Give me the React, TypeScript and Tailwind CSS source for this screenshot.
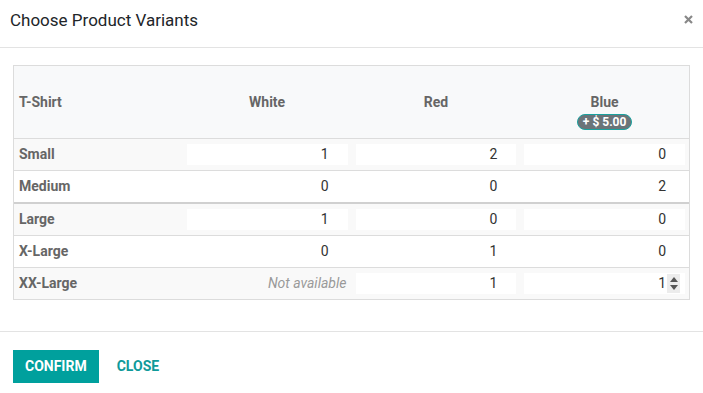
const colors = ['White', 'Red', 'Blue'];

type Cell = number | null;

const rows: { label: string; values: Cell[]; thick?: boolean }[] = [
  { label: 'Small', values: [1, 2, 0] },
  { label: 'Medium', values: [0, 0, 2] },
  { label: 'Large', values: [1, 0, 0], thick: true },
  { label: 'X-Large', values: [0, 1, 0] },
  { label: 'XX-Large', values: [null, 1, 1] },
];

function Spinner() {
  return (
    <div className="absolute right-[5px] top-[1px] bottom-[1px] w-[13px] bg-[#ececec] flex flex-col items-center justify-center gap-[3px]">
      <div className="w-0 h-0 border-l-[4px] border-r-[4px] border-b-[5px] border-l-transparent border-r-transparent border-b-[#555]" />
      <div className="w-0 h-0 border-l-[4px] border-r-[4px] border-t-[5px] border-l-transparent border-r-transparent border-t-[#555]" />
    </div>
  );
}

export default function App() {
  return (
    <div
      className="w-[703px] h-[393px] bg-white text-[#212529] overflow-hidden"
      style={{ fontFamily: 'Roboto, "Liberation Sans", sans-serif' }}
    >
      <div className="h-[48px] border-b border-[#e3e3e3] flex items-start justify-between pl-[10px] pr-[10px] pt-[9px]">
        <div className="text-[17px] leading-[22px] text-[#212529]">Choose Product Variants</div>
        <svg width="9" height="9" viewBox="0 0 9 9" className="mt-[6px]">
          <path d="M1 1 L8 8 M8 1 L1 8" stroke="#888" strokeWidth="2.2" strokeLinecap="butt" />
        </svg>
      </div>

      <div className="px-[13px] pt-[17px] h-[283px]">
        <div className="border border-[#dcdcdc] text-[14px] text-[#666]">
          <div className="grid grid-cols-4 h-[72px] bg-[#f8f9fa] font-bold">
            <div className="pl-[5px] pt-[27px] leading-[18px]">T-Shirt</div>
            {colors.map((c) => (
              <div key={c} className="flex flex-col items-center pt-[27px]">
                <div className="leading-[18px]">{c}</div>
                {c === 'Blue' && (
                  <div className="mt-[3px] h-[16px] px-[5px] rounded-full bg-[#6b7479] border-[1.5px] border-[#1aa29f] text-white text-[12px] leading-[13px] font-bold flex items-center">
                    + $ 5.00
                  </div>
                )}
              </div>
            ))}
          </div>
          {rows.map((r, i) => (
            <div
              key={r.label}
              className={`grid grid-cols-4 ${r.thick ? 'h-[33px] border-t-2 border-[#d0d0d0]' : 'h-[32px] border-t border-[#dcdcdc]'} ${i % 2 === 0 ? 'bg-[#f9f9f9]' : 'bg-white'}`}
            >
              <div className="pl-[5px] flex items-center font-bold">{r.label}</div>
              {r.values.map((v, j) => (
                <div key={j} className="px-[4px] py-[5px] flex">
                  {v === null ? (
                    <div className="flex-1 flex items-center justify-end pr-[1px] italic text-[#999]">Not available</div>
                  ) : (
                    <div className="relative flex-1 bg-white flex items-center justify-end pr-[19px] text-[14px] text-[#333]">
                      {v}
                      {i === 4 && j === 2 && <Spinner />}
                    </div>
                  )}
                </div>
              ))}
            </div>
          ))}
        </div>
      </div>

      <div className="border-t border-[#e3e3e3] pt-[18px] pl-[13px] flex items-center gap-[18px]">
        <button className="h-[33px] px-[12px] bg-[#00a09d] text-white text-[14px] font-bold">CONFIRM</button>
        <button className="h-[33px] text-[#0f9a9a] text-[14px] font-bold">CLOSE</button>
      </div>
    </div>
  );
}
